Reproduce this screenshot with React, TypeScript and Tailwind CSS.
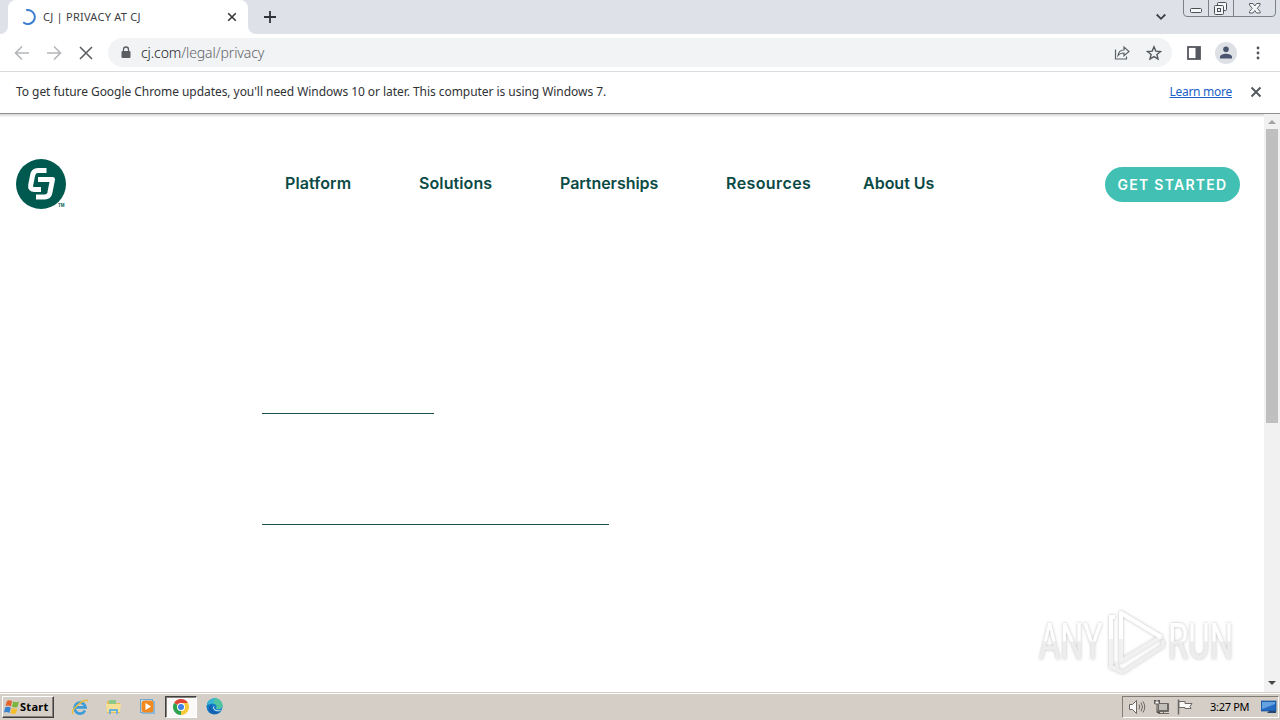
import React from "react";

const UI = "font-['Noto_Sans','Open_Sans',sans-serif]";

function TabStrip() {
  return (
    <div className="relative flex h-[34px] shrink-0 bg-[#dee1e8]">
      <div className="flex w-[8px] bg-white">
        <div className="w-full rounded-br-[8px] bg-[#dee1e8]" />
      </div>
      <div className="flex w-[240px] items-center rounded-t-[8px] bg-white pl-[12px] pr-[10px]">
        <svg className="h-[16px] w-[16px] shrink-0" viewBox="0 0 16 16" fill="none" stroke="#3f7fd0" strokeWidth="2">
          <path d="M6.2 1.2A7 7 0 1 1 3.2 13.3" />
        </svg>
        <span className="ml-[7px] whitespace-nowrap text-[11px] leading-[16px] tracking-[0.25px] text-[#3c4043]">CJ | PRIVACY AT CJ</span>
        <svg className="ml-auto h-[12px] w-[12px]" viewBox="0 0 12 12" stroke="#35383c" strokeWidth="1.6">
          <path d="M2.200 2.200l7.600 7.600M9.800 2.200l-7.600 7.600" />
        </svg>
      </div>
      <div className="flex w-[8px] bg-white">
        <div className="w-full rounded-bl-[8px] bg-[#dee1e8]" />
      </div>
      <svg className="ml-[8px] mt-[11px] h-[12px] w-[12px]" viewBox="0 0 12 12" stroke="#303338" strokeWidth="1.800">
        <path d="M6 0v12M0 6h12" />
      </svg>
      <svg className="ml-auto mr-[17px] mt-[13px] h-[8px] w-[10px]" viewBox="0 0 10 8" fill="none" stroke="#3c4043" strokeWidth="1.800">
        <path d="M.7 1.5L5 5.8l4.300-4.300" />
      </svg>
      <svg className="mr-[4px] h-[17px] w-[93px]" viewBox="0 0 93 17" fill="none" stroke="#7c8189">
        <path d="M.5 0v13q0 3.500 3.500 3.500h85q3.500 0 3.500-3.500V0M25.500 0v16M50.500 0v16" />
        <rect x="7.500" y="8.500" width="11" height="4" rx="1" fill="#f5f6f8" stroke="#4b4e55" />
        <g stroke="#4b4e55" fill="#f5f6f8">
          <rect x="34.500" y="2.500" width="9" height="8" rx="1" />
          <rect x="31.500" y="5.500" width="9" height="9" rx="1" />
          <rect x="34.500" y="8.500" width="3" height="3" />
        </g>
        <path d="M66.500 3.500h3.500l1.800 2.500 1.800-2.500h3.500v1.500L74.300 8.300l2.800 3.200V13h-3.500l-1.800-2.500L70 13h-3.500v-1.500l2.800-3.200L66.500 5z" stroke="#5a5d64" fill="#f5f6f8" />
      </svg>
    </div>
  );
}

function Toolbar() {
  return (
    <div className="flex h-[38px] shrink-0 items-center border-b border-[#d9dbde] bg-white pl-[14px]">
      <svg className="h-[16px] w-[80px]" viewBox="0 0 80 16" fill="none" stroke="#b4b6b9" strokeWidth="1.600">
        <path d="M15 8H2M8 1.500L1.500 8 8 14.500M33 8h13M40 1.500L46.500 8 40 14.500" />
        <path d="M66 2l12 12M78 2L66 14" stroke="#5b5e62" />
      </svg>
      <div className="ml-[14px] flex h-[29px] w-[1064px] items-center rounded-full bg-[#f1f3f5] pl-[13px] pr-[10px]">
        <svg className="h-[14px] w-[10px]" viewBox="0 0 10 14">
          <rect x=".5" y="5" width="9" height="7" rx="1" fill="#5a5e63" />
          <path d="M2.500 6V3.500a2.500 2.500 0 0 1 5 0V6" fill="none" stroke="#5a5e63" strokeWidth="1.300" />
        </svg>
        <span className="ml-[10px] whitespace-nowrap text-[14px] font-light leading-[20px] tracking-[-0.09px] text-[#5f6368]">
          <span className="text-[#202124]">cj.com</span>/legal/privacy
        </span>
        <svg className="ml-auto h-[16px] w-[16px]" viewBox="0 0 16 16" fill="none" stroke="#5f6368" strokeWidth="1.200">
          <path d="M1.500 4.500v9.500h11v-2.500" />
          <path d="M4 10.500c.5-4 3-5.500 6-5.500V2L15 6.500l-5 4.300V8C7.500 8 5.500 8.500 4 10.500z" />
        </svg>
        <svg className="ml-[16px] h-[16px] w-[16px]" viewBox="0 0 16 16" fill="none" stroke="#54585d" strokeWidth="1.400">
          <path d="M8 1.800l1.800 4.300 4.700.4-3.600 3 1.100 4.600L8 11.600l-4 2.500 1.100-4.600-3.600-3 4.700-.4z" />
        </svg>
      </div>
      <svg className="ml-[15px] h-[14px] w-[14px]" viewBox="0 0 14 14">
        <rect x="1" y="1" width="12" height="12" fill="none" stroke="#55585e" strokeWidth="1.800" />
        <path d="M8.500 1H13v12H8.500z" fill="#55585e" />
      </svg>
      <svg className="ml-[14px] h-[22px] w-[22px]" viewBox="0 0 22 22">
        <circle cx="11" cy="11" r="11" fill="#dde0e5" />
        <circle cx="11" cy="7.300" r="2.800" fill="#49546f" />
        <path d="M5 16.500v-1.500c0-2 3.500-3.200 6-3.200s6 1.200 6 3.200v1.500z" fill="#49546f" />
      </svg>
      <svg className="ml-[19px] h-[14px] w-[4px]" viewBox="0 0 4 14" fill="#505358">
        <circle cx="2" cy="2" r="1.400" />
        <circle cx="2" cy="7" r="1.400" />
        <circle cx="2" cy="12" r="1.400" />
      </svg>
    </div>
  );
}

function InfoBar() {
  return (
    <div className="flex h-[41px] shrink-0 items-center bg-white pb-px pl-[16px] pr-[18px] text-[12px] leading-[16px]">
      <span className="whitespace-nowrap tracking-[-0.052px] text-[#303236]">
        To get future Google Chrome updates, you'll need Windows 10 or later. This computer is using Windows 7.
      </span>
      <a className="ml-auto whitespace-nowrap tracking-[-0.27px] text-[#1a5fc8] underline">Learn more</a>
      <svg className="ml-[18px] h-[12px] w-[12px]" viewBox="0 0 12 12" stroke="#55585c" strokeWidth="1.900">
        <path d="M1.500 1.500l9 9M10.500 1.500l-9 9" />
      </svg>
    </div>
  );
}

function Watermark() {
  return (
    <svg className="absolute bottom-[15px] right-[19px] h-[72px] w-[212px] overflow-visible" viewBox="0 0 212 72">
      <defs>
        <linearGradient id="fade" gradientUnits="userSpaceOnUse" x1="0" y1="-36" x2="0" y2="0">
          <stop offset="0.5" stopColor="#ffffff" />
          <stop offset="0.52" stopColor="#ededed" />
        </linearGradient>
        <filter id="glow" x="-10%" y="-20%" width="120%" height="140%">
          <feDropShadow dx="0" dy="0" stdDeviation="1.500" floodColor="#777777" floodOpacity="0.5" />
        </filter>
      </defs>
      <g filter="url(#glow)">
        <g fill="url(#fade)" fontFamily="Roboto, sans-serif" fontSize="50" fontWeight="400">
          <text transform="translate(6 54) scale(.65 1)">ANY</text>
          <text transform="translate(135 54) scale(.66 1)">RUN</text>
        </g>
        <g fill="none" strokeLinejoin="round">
          <path d="M88 8L128 32 88 56z" stroke="#f1f1f1" strokeWidth="4" />
          <path d="M88 34V8L128 32" stroke="#fff" strokeWidth="4" />
          <path d="M82 12h-4v50l6 2" stroke="#f1f1f1" strokeWidth="4" />
          <path d="M82 12h-4v22" stroke="#fff" strokeWidth="4" />
          <path d="M84 58v7l6 2 40-26v-6" stroke="#efefef" strokeWidth="3.500" />
        </g>
      </g>
    </svg>
  );
}

function Page() {
  return (
    <div className="relative flex min-h-0 flex-1 border-t border-[#8e8e8e] bg-white shadow-[inset_0_3px_2px_-1px_#dcdcdc]">
      <main className="relative flex flex-1 flex-col">
        <header className="mt-[45px] flex h-[51px] items-center pl-[16px] pr-[24px]">
          <svg className="h-[51px] w-[51px] shrink-0" viewBox="0 0 51 51">
            <circle cx="25" cy="25" r="25" fill="#00594f" />
            <g fill="none" stroke="#fff" strokeWidth="5" strokeLinejoin="round">
              <path d="M30.500 11.500H22q-4.500 0-5.300 4.500l-2 10q-.8 4.500 3.800 4.500H25" />
              <path d="M22 20.500h14.500l-2.700 13.500q-.9 4-5 4H20" />
            </g>
            <text x="42" y="48" fontSize="4.500" fontWeight="700" fill="#00594f" fontFamily="Liberation Sans">TM</text>
          </svg>
          <nav className="ml-[218px] flex whitespace-nowrap pb-[3px] font-['Inter',sans-serif] text-[16px] font-semibold leading-[20px] text-[#0b4a45]">
            <span className="w-[134px] tracking-[0.1px]">Platform</span>
            <span className="w-[141px] tracking-[0.1px]">Solutions</span>
            <span className="w-[166px] tracking-[-0.05px]">Partnerships</span>
            <span className="w-[137px] tracking-[0.4px]">Resources</span>
            <span>About Us</span>
          </nav>
          <button className="ml-auto flex h-[35px] w-[135px] items-center justify-center whitespace-nowrap rounded-full bg-[#41c0b3] font-['Inter',sans-serif] text-[14px] font-semibold tracking-[1.250px] text-white">
            GET STARTED
          </button>
        </header>
        <div className="ml-[262px] mt-[203px] h-px w-[172px] bg-[#1c4e50]" />
        <div className="ml-[262px] mt-[110px] h-px w-[347px] bg-[#1c4e50]" />
        <Watermark />
      </main>
      <div className="flex w-[16px] flex-col items-center bg-[#f1f1f1]">
        <svg className="h-[15px] w-[16px]" viewBox="0 0 16 15" fill="#a3a3a3">
          <path d="M4 10l4-4 4 4z" />
        </svg>
        <div className="h-[294px] w-[12px] bg-[#bfbfbf]" />
        <svg className="mt-auto h-[17px] w-[16px]" viewBox="0 0 16 17" fill="#484848">
          <path d="M4 6l4 4 4-4z" />
        </svg>
      </div>
    </div>
  );
}

function Taskbar() {
  return (
    <div className="flex h-[28px] shrink-0 flex-col bg-[#d5cec6]">
      <div className="h-[2px] border-b border-white bg-[#d5cec6]" />
      <div className="flex flex-1 items-center pb-px pl-[2px] pr-px">
        <div className="flex h-[22px] w-[52px] items-center border border-b-[#404040] border-l-white border-r-[#404040] border-t-white pl-px shadow-[inset_-1px_-1px_#85807a]">
          <svg className="h-[16px] w-[16px]" viewBox="0 0 16 16">
            <path d="M3 2q2-1.500 5 0L7 7.500Q4 6 1.500 7z" fill="#e4632d" />
            <path d="M9 2.500q3 1.500 6 0L13.500 8Q11 9 8 7.800z" fill="#7bb53b" />
            <path d="M1.200 8.200Q4 7 6.800 8.600L5.500 14Q3 12.500 0 13.500z" fill="#3a83cf" />
            <path d="M7.800 9q3 1.300 5.500.2L12 14.500q-3 1-5.500-.5z" fill="#f4bd2b" />
          </svg>
          <span className="text-[11px] font-bold leading-[14px] tracking-[0.3px] text-black">Start</span>
        </div>
        <svg className="ml-[17px] h-[18px] w-[18px]" viewBox="0 0 18 18" fill="none">
          <path d="M14 12.500A5.500 5.500 0 1 1 14.500 9.300H4.500" stroke="#3b9cd8" strokeWidth="2.700" />
          <path d="M2 16C-1 12 14-1 17 3" stroke="#e8bd3e" strokeWidth="1.500" />
        </svg>
        <svg className="ml-[16px] h-[18px] w-[18px]" viewBox="0 0 18 18">
          <path d="M2 3h6l1 2h6v10H2z" fill="#e7bd5b" />
          <path d="M4 2h7v4H4z" fill="#8cc887" />
          <path d="M1 6h15l-1 8H2z" fill="#f7df93" />
          <path d="M4 16v-5h9v5h-2v-3H6v3z" fill="#69b2dc" />
        </svg>
        <svg className="ml-[16px] h-[18px] w-[18px]" viewBox="0 0 18 18">
          <rect x="1.500" y="1.500" width="12" height="13" fill="#cfe6f7" stroke="#6ca6d2" />
          <rect x="3" y="3" width="13" height="13" fill="#86b8df" />
          <rect x="2.500" y="2.500" width="12" height="12" rx="3" fill="#f18b21" />
          <path d="M6.500 5l5.500 3.500L6.500 12z" fill="#fff" />
        </svg>
        <div className="ml-[8px] flex h-[22px] w-[32px] items-center justify-center border border-b-white border-l-[#404040] border-r-white border-t-[#404040] bg-[#faf9f8] shadow-[inset_1px_1px_#85807a]">
          <svg className="h-[16px] w-[16px]" viewBox="0 0 16 16">
            <path d="M8 8L1.070 4A8 8 0 0 1 14.930 4z" fill="#df4637" />
            <path d="M8 8L14.930 4A8 8 0 0 1 8 16z" fill="#f7c938" />
            <path d="M8 8v8A8 8 0 0 1 1.070 4z" fill="#2da350" />
            <path d="M8 4h6.930L12 8z" fill="#f7c938" />
            <circle cx="8" cy="8" r="4" fill="#fff" />
            <circle cx="8" cy="8" r="3" fill="#3f7fe6" />
          </svg>
        </div>
        <svg className="ml-[9px] h-[17px] w-[17px]" viewBox="0 0 17 17">
          <circle cx="8.500" cy="8.500" r="8" fill="#1479c4" />
          <path d="M1 7C2-2 16-2 16.500 8c0 4-6 4.500-6.500 2 2-2-1-5-5-4-2 0-3 1-4 1z" fill="#38b6d3" />
          <path d="M9 .5c5 0 8 4 7.500 8-1 3-5 3-6.500 2 2-2 0-5-3-5z" fill="#50c49f" />
          <path d="M6 7c-2 5 3 8 8 6-3 5-12 3-11-3 0-2 1-3 3-3z" fill="#155fae" />
          <path d="M8.500 7.500q-1.500 3 1.500 4.500 3 1 6-.5l-2 1.500q-6 1-7-3.500z" fill="#e5edf1" />
        </svg>
        <div className="ml-auto flex h-[22px] w-[157px] items-center border border-b-white border-l-[#827c75] border-r-white border-t-[#827c75] pl-[5px]">
          <svg className="h-[18px] w-[68px] shrink-0" viewBox="0 0 68 18" fill="none" stroke="#6a6764">
            <path d="M1.500 6.500h3l4-4v13l-4-4h-3z" fill="#fafafa" />
            <path d="M11 6.500q1.500 2.500 0 5M13 4.500q3 4.500 0 9M15 3.500q3.500 5.500 0 11" />
            <path d="M31 5.500h9.500v8H29" fill="#aaa6a2" />
            <rect x="30.500" y="5.500" width="9" height="7" fill="#c2beb9" />
            <path d="M30 15.500h11M35.500 13v2" />
            <path d="M26.500 2v3.500h5V2M27.500 2v2M30.500 2v2M29 5.500v9h3" stroke="#55524f" />
            <path d="M27 3h4v3h-4z" fill="#fff" />
            <path d="M50.500 1.500v15" strokeWidth="1.500" />
            <path d="M51 3.500h6v2h7l-2 3 1 2h-6v-1h-6z" fill="#faf9f8" />
          </svg>
          <span className="ml-[14px] whitespace-nowrap text-[11px] leading-[14px] tracking-[-0.3px] text-black">3:27 PM</span>
          <svg className="ml-auto mr-px h-[14px] w-[16px]" viewBox="0 0 16 14">
            <rect y="1" width="15" height="10" fill="#246ac2" stroke="#164a8c" strokeWidth=".7" />
            <path d="M1 2h13v2L1 9z" fill="#63a2df" />
            <path d="M8 11h7v2H6z" fill="#27466b" />
          </svg>
        </div>
      </div>
    </div>
  );
}

export default function App() {
  return (
    <div className={`flex h-[720px] w-[1280px] flex-col overflow-hidden bg-white ${UI}`}>
      <TabStrip />
      <Toolbar />
      <InfoBar />
      <Page />
      <Taskbar />
    </div>
  );
}
